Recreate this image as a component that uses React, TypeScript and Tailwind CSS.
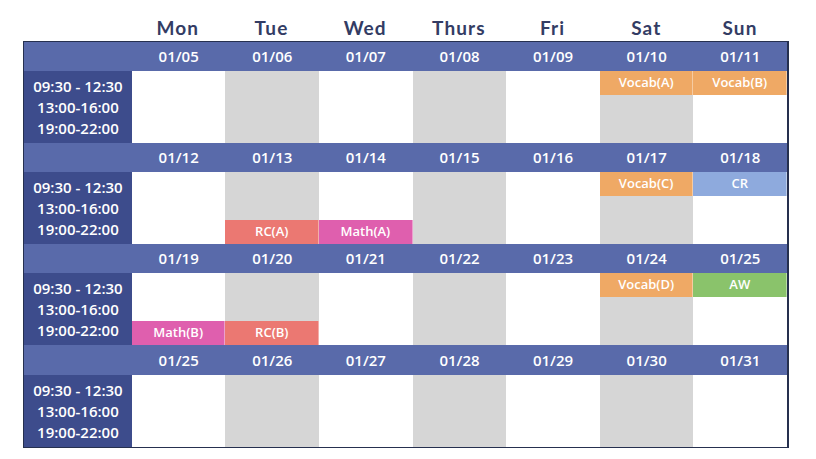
const DAYS = ["Mon", "Tue", "Wed", "Thurs", "Fri", "Sat", "Sun"];
const TIMES = ["09:30 - 12:30", "13:00-16:00", "19:00-22:00"];

const COLORS: Record<string, string> = {
  orange: "bg-[#efa965]",
  salmon: "bg-[#eb7872]",
  pink: "bg-[#df5fae]",
  blue: "bg-[#8eaadd]",
  green: "bg-[#8ac36b]",
};

type Ev = { day: number; slot: number; label: string; color: string };

const WEEKS: { dates: string[]; events: Ev[] }[] = [
  {
    dates: ["01/05", "01/06", "01/07", "01/08", "01/09", "01/10", "01/11"],
    events: [
      { day: 5, slot: 0, label: "Vocab(A)", color: "orange" },
      { day: 6, slot: 0, label: "Vocab(B)", color: "orange" },
    ],
  },
  {
    dates: ["01/12", "01/13", "01/14", "01/15", "01/16", "01/17", "01/18"],
    events: [
      { day: 1, slot: 2, label: "RC(A)", color: "salmon" },
      { day: 2, slot: 2, label: "Math(A)", color: "pink" },
      { day: 5, slot: 0, label: "Vocab(C)", color: "orange" },
      { day: 6, slot: 0, label: "CR", color: "blue" },
    ],
  },
  {
    dates: ["01/19", "01/20", "01/21", "01/22", "01/23", "01/24", "01/25"],
    events: [
      { day: 0, slot: 2, label: "Math(B)", color: "pink" },
      { day: 1, slot: 2, label: "RC(B)", color: "salmon" },
      { day: 5, slot: 0, label: "Vocab(D)", color: "orange" },
      { day: 6, slot: 0, label: "AW", color: "green" },
    ],
  },
  {
    dates: ["01/25", "01/26", "01/27", "01/28", "01/29", "01/30", "01/31"],
    events: [],
  },
];

export default function App() {
  return (
    <div
      className="w-[816px] h-[459px] bg-white pl-[23px] overflow-hidden"
      style={{ fontFamily: "'Open Sans', Lato, sans-serif" }}
    >
      {/* 요일 헤더 */}
      <div className="flex h-[41px] pt-[16px]">
        <div className="w-[108px]" />
        {DAYS.map((d) => (
          <div
            key={d}
            className="w-[93.7px] text-center text-[19px] leading-[24px] font-bold tracking-[0.06em] text-[#333c64]"
            style={{ fontFamily: "Lato, sans-serif" }}
          >
            {d}
          </div>
        ))}
      </div>

      <div className="w-[766px] border border-[#26304f] border-r-2">
        {WEEKS.map((week, wi) => (
          <div key={wi}>
            <div
              className={`flex bg-[#596aaa] text-white text-[15px] font-semibold ${
                wi === 3 ? "h-[30px]" : "h-[29px]"
              } items-center`}
            >
              <div className="w-[108px]" />
              {week.dates.map((dt) => (
                <div key={dt} className="w-[93.7px] text-center">
                  {dt}
                </div>
              ))}
            </div>
            <div className="flex h-[72px]">
              <div className="w-[108px] bg-[#3d4c8c] flex flex-col justify-center items-center gap-[1px] text-white text-[15px] font-semibold leading-[20px]">
                {TIMES.map((t) => (
                  <div key={t}>{t}</div>
                ))}
              </div>
              {DAYS.map((_, di) => (
                <div
                  key={di}
                  className={`w-[93.7px] grid grid-rows-3 ${
                    di % 2 === 1 ? "bg-[#d6d6d6]" : "bg-white"
                  }`}
                >
                  {[0, 1, 2].map((slot) => {
                    const ev = week.events.find(
                      (e) => e.day === di && e.slot === slot
                    );
                    return ev ? (
                      <div
                        key={slot}
                        className={`${COLORS[ev.color]} flex items-center justify-center text-white text-[13px] font-semibold border-r border-white/40`}
                      >
                        {ev.label}
                      </div>
                    ) : (
                      <div key={slot} />
                    );
                  })}
                </div>
              ))}
            </div>
          </div>
        ))}
      </div>
    </div>
  );
}
